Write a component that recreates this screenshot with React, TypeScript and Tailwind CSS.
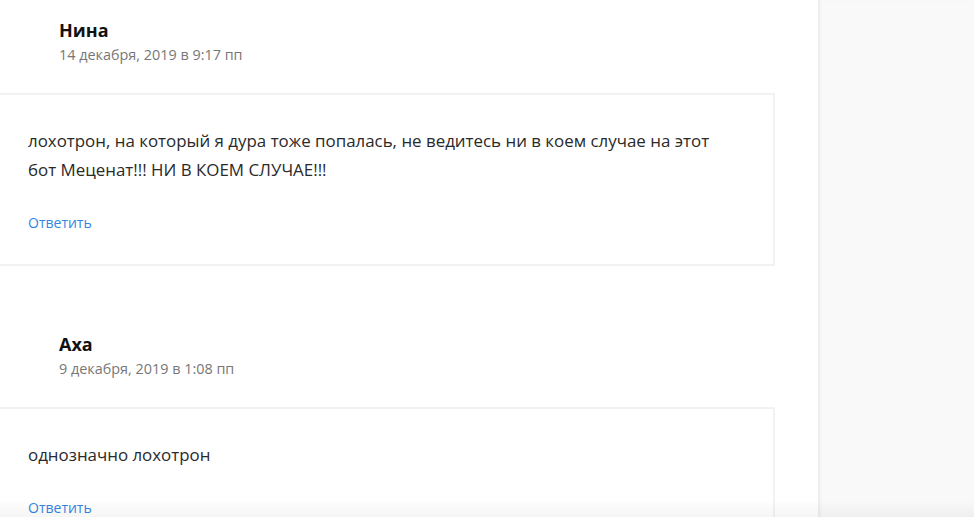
import React from "react";

type Comment = {
  author: string;
  date: string;
  lines: string[];
};

const comments: Comment[] = [
  {
    author: "Нина",
    date: "14 декабря, 2019 в 9:17 пп",
    lines: [
      "лохотрон, на который я дура тоже попалась, не ведитесь ни в коем случае на этот",
      "бот Меценат!!! НИ В КОЕМ СЛУЧАЕ!!!",
    ],
  },
  {
    author: "Аха",
    date: "9 декабря, 2019 в 1:08 пп",
    lines: ["однозначно лохотрон"],
  },
];

function CommentItem({ c, first }: { c: Comment; first?: boolean }) {
  return (
    <article className={first ? "pt-[18px]" : "pt-[66px]"}>
      {/* author + date */}
      <header className="pl-[59px]">
        <div className="text-[18px] leading-[24px] font-bold text-[#111]">{c.author}</div>
        <div className="mt-[3px] text-[14.4px] leading-[20px] text-[#777]">{c.date}</div>
      </header>

      {/* comment body */}
      <div className="-ml-[4px] mt-[28px] w-[779px] border-2 border-[#f2f2f2] pl-[30px] pt-[31px] pb-[31px]">
        {c.lines.map((l, i) => (
          <p key={i} className="text-[16.9px] leading-[29px] text-[#2a2a2a]">
            {l}
          </p>
        ))}
        <a href="#" className="mt-[29px] block text-[14px] leading-[20px] text-[#3385e0]">
          Ответить
        </a>
      </div>
    </article>
  );
}

export default function App() {
  return (
    <div
      className="w-[974px] h-[529px] overflow-hidden bg-white"
      style={{ fontFamily: '"Segoe UI", "Open Sans", "Noto Sans", sans-serif' }}
    >
      <div className="relative flex h-[517px] overflow-hidden">
        <main className="w-[818px] shrink-0 bg-white">
          {comments.map((c, i) => (
            <CommentItem key={i} c={c} first={i === 0} />
          ))}
        </main>
        <aside className="flex-1 bg-[#f9f9f9] shadow-[inset_3px_0_3px_-1px_rgba(0,0,0,0.06)]" />
        {/* bottom fade */}
        <div className="pointer-events-none absolute inset-x-0 bottom-0 h-[18px] bg-gradient-to-b from-transparent to-black/[0.04]" />
      </div>
    </div>
  );
}
